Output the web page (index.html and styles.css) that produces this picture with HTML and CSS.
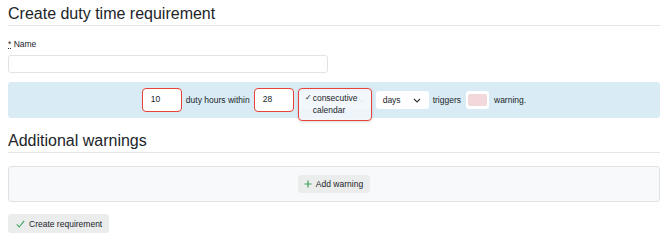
FILE: index.html
```html
<!DOCTYPE html>
<html lang="en">
<head>
    <meta charset="UTF-8">
    <title>Create duty time requirement</title>
    <link rel="stylesheet" href="styles.css">
</head>
<body>

    <div class="page">
        <h1 class="page__title">Create duty time requirement</h1>

        <div class="field">
            <label class="field__label"><abbr title="required">*</abbr> Name</label>
            <input class="field__input" type="text">
        </div>

        <div class="rule">
            <div class="rule__input is-marked">10</div>
            <span>duty hours within</span>
            <div class="rule__input is-marked">28</div>
            <div class="rule__select-wrap">
                <div class="rule__select rule__select--kind">
                    <svg class="chevron" width="8" height="5" viewBox="0 0 8 5"><path d="M1 1l3 3 3-3" fill="none" stroke="#b5bcc2" stroke-width="1.1"/></svg>
                </div>
                <ul class="rule__menu is-marked">
                    <li class="is-checked">consecutive</li>
                    <li>calendar</li>
                </ul>
            </div>
            <div class="rule__select rule__select--unit">days
                <svg class="chevron" width="8" height="5" viewBox="0 0 8 5"><path d="M1 1l3 3 3-3" fill="none" stroke="#333" stroke-width="1.1"/></svg>
            </div>
            <span>triggers</span>
            <div class="rule__swatch"><span></span></div>
            <span>warning.</span>
        </div>

        <h2 class="page__subtitle">Additional warnings</h2>

        <div class="warnings">
            <button class="btn">
                <svg width="8" height="8" viewBox="0 0 8 8"><path d="M4 0.5v7M0.5 4h7" stroke="#3da35d" stroke-width="1.2"/></svg>
                Add warning
            </button>
        </div>

        <button class="btn btn--submit">
            <svg width="9" height="8" viewBox="0 0 9 8"><path d="M0.8 4.4l2.4 2.6 5-6.2" fill="none" stroke="#3da35d" stroke-width="1.1"/></svg>
            Create requirement
        </button>
    </div>

</body>
</html>
```

FILE: styles.css
```css
html {
  box-sizing: border-box;
}

*,
*::before,
*::after {
  box-sizing: inherit;
}

body {
  margin: 0;
  background: #fff;
  color: #212529;
  font-family: "Liberation Sans", Arial, sans-serif;
  font-size: 8.5px;
}

ul {
  list-style: none;
  margin: 0;
  padding: 0;
}

button {
  border: 0;
  font-family: inherit;
  font-size: inherit;
  color: inherit;
}

.page {
  padding: 0 10px 0 8px;
}

.page__title,
.page__subtitle {
  margin: 0;
  font-size: 16px;
  font-weight: 400;
  line-height: 20px;
  padding-bottom: 1px;
  border-bottom: 1px solid #e3e5e8;
}

.page__title {
  padding-top: 4px;
}

.page__subtitle {
  margin-top: 13px;
}

/* Name field */

.field {
  margin-top: 13px;
}

.field__label {
  display: block;
  font-size: 8.5px;
  line-height: 10px;
}

.field__label abbr {
  text-decoration: underline dotted;
}

.field__input {
  display: block;
  margin-top: 6px;
  width: 320px;
  height: 18px;
  border: 1px solid #e1e3e6;
  border-radius: 3px;
  outline: none;
}

/* Rule band */

.rule {
  margin-top: 9px;
  height: 36px;
  background: #d9ecf6;
  border-radius: 3px;
  display: flex;
  align-items: center;
  justify-content: center;
  gap: 4px;
}

.is-marked {
  border: 1.5px solid #e8423b;
  border-radius: 4px;
}

.rule__input {
  width: 40px;
  height: 24px;
  background: #fff;
  padding-left: 8px;
  line-height: 21px;
}

.rule__select-wrap {
  position: relative;
  width: 74px;
  height: 24px;
}

.rule__select {
  height: 18px;
  background: #fff;
  border-radius: 3px;
  line-height: 18px;
  padding-left: 7px;
}

.rule__select--kind {
  margin-top: 3px;
  display: flex;
  align-items: center;
  justify-content: flex-end;
  padding-right: 6px;
}

.rule__select--unit {
  width: 53px;
  display: flex;
  align-items: center;
  justify-content: space-between;
  padding-right: 8px;
}

.rule__menu {
  position: absolute;
  top: 0;
  left: 0;
  width: 74px;
  height: 33px;
  background: rgba(240, 246, 250, 0.86);
  box-shadow: 0 1px 3px rgba(0, 0, 0, 0.15);
  padding: 3px 0 0 14px;
  line-height: 12px;
}

.rule__menu li {
  position: relative;
}

.rule__menu .is-checked::before {
  content: "\2713";
  position: absolute;
  left: -8px;
  font-size: 8px;
}

.rule__swatch {
  width: 23px;
  height: 18px;
  background: #fff;
  border-radius: 3px;
  padding: 3px 2px;
  margin: 0 1px;
}

.rule__swatch span {
  display: block;
  height: 100%;
  background: #f2d8da;
  border-radius: 2px;
}

/* Warnings */

.warnings {
  margin-top: 13px;
  height: 36px;
  background: #f8f9fa;
  border: 1px solid #dfe2e5;
  border-radius: 3px;
  display: flex;
  align-items: center;
  justify-content: center;
}

.btn {
  display: inline-flex;
  align-items: center;
  gap: 4px;
  height: 18px;
  padding: 0 7px 0 6px;
  background: #ebecec;
  border-radius: 3px;
}

.btn--submit {
  margin-top: 12px;
  height: 19px;
  padding: 0 7px 0 8px;
}
```
